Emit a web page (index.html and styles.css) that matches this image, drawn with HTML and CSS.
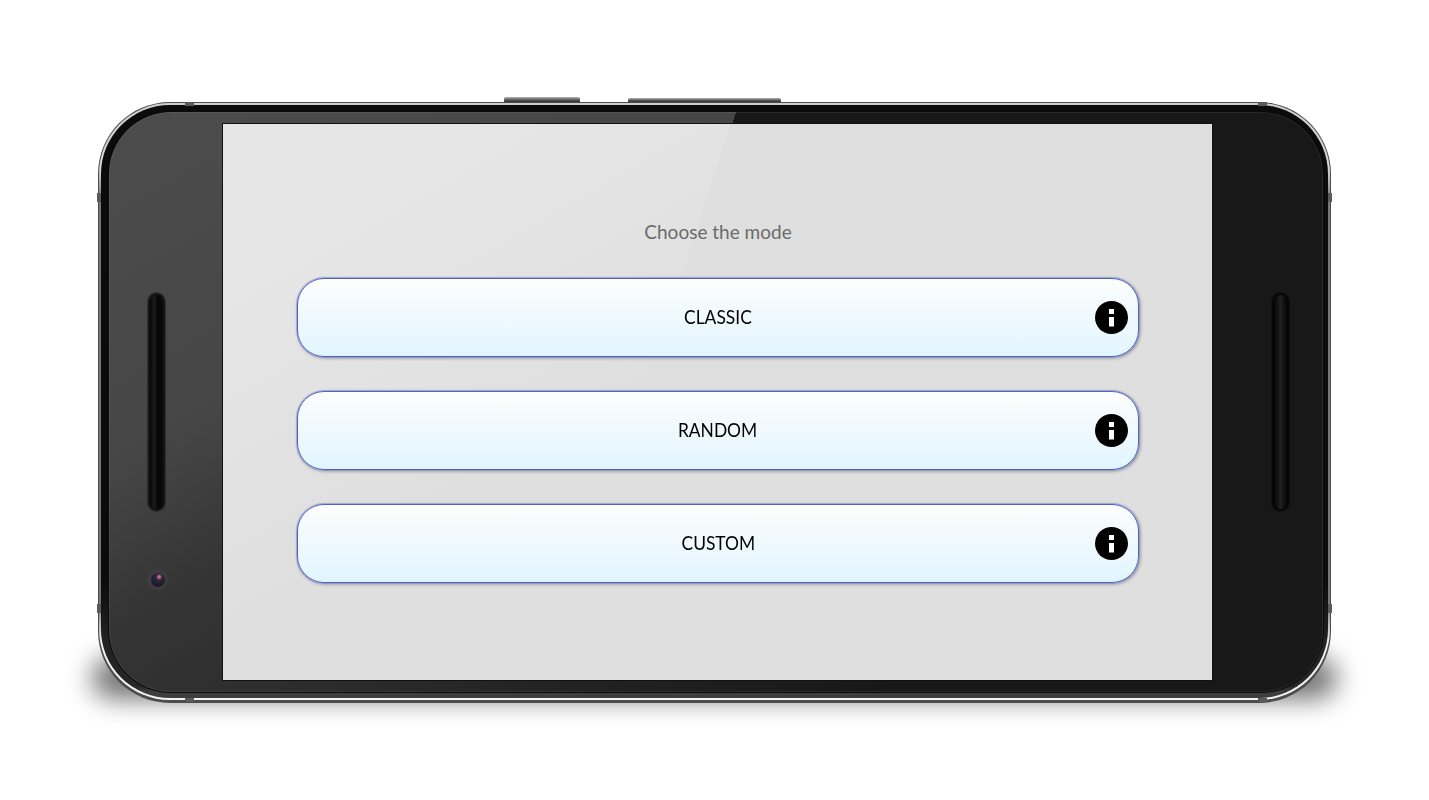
FILE: index.html
```html
<!DOCTYPE html>
<html lang="en">
<head>
    <meta charset="UTF-8">
    <title>Choose the mode</title>
    <link rel="stylesheet" href="styles.css">
</head>
<body>
    <div class="stage">
        <div class="keys">
            <span class="key key-power"></span>
            <span class="key key-volume"></span>
        </div>
        <div class="phone">
            <div class="shadow"></div>
            <div class="rim">
                <div class="band">
                    <div class="face">
                        <div class="bezel bezel-left">
                            <div class="speaker"></div>
                            <div class="camera"><span class="lens"></span></div>
                        </div>
                        <main class="screen">
                            <h1 class="title">Choose the mode</h1>
                            <div class="modes">
                                <button class="mode">
                                    <span class="mode-name">CLASSIC</span>
                                    <svg class="info" viewBox="0 0 33 33"><circle cx="16.5" cy="16.5" r="16.5" fill="#000"/><path d="M14 8h5v5h-5zM14 16h5v9.500h-5z" fill="#fff"/></svg>
                                </button>
                                <button class="mode">
                                    <span class="mode-name">RANDOM</span>
                                    <svg class="info" viewBox="0 0 33 33"><circle cx="16.5" cy="16.5" r="16.5" fill="#000"/><path d="M14 8h5v5h-5zM14 16h5v9.500h-5z" fill="#fff"/></svg>
                                </button>
                                <button class="mode">
                                    <span class="mode-name">CUSTOM</span>
                                    <svg class="info" viewBox="0 0 33 33"><circle cx="16.5" cy="16.5" r="16.5" fill="#000"/><path d="M14 8h5v5h-5zM14 16h5v9.500h-5z" fill="#fff"/></svg>
                                </button>
                            </div>
                        </main>
                        <div class="bezel bezel-right">
                            <div class="speaker speaker-dark"></div>
                        </div>
                    </div>
                </div>
            </div>
            <span class="joint joint-top joint-a"></span>
            <span class="joint joint-top joint-b"></span>
            <span class="joint joint-bottom joint-a"></span>
            <span class="joint joint-bottom joint-b"></span>
            <span class="joint joint-left joint-c"></span>
            <span class="joint joint-left joint-d"></span>
            <span class="joint joint-right joint-c"></span>
            <span class="joint joint-right joint-d"></span>
        </div>
    </div>
</body>
</html>
```

FILE: styles.css
```css
html { background: #fff; }
html, body { margin: 0; height: 100%; overflow: hidden; }
body { font-family: "Lato", "Open Sans", sans-serif; }
.stage { width: 1233px; padding: 97px 0 0 98px; }

/* side keys on the top edge */
.keys { display: flex; gap: 48px; height: 5px; padding-left: 406px; }
.key { display: block; background: linear-gradient(#b5b5b5, #555 60%, #333); border-radius: 2px 2px 0 0; }
.key-power { width: 76px; }
.key-volume { width: 153px; height: 4px; margin-top: 1px; }

/* phone body, ring by ring */
.phone { position: relative; width: 1233px; height: 601px; box-sizing: border-box; padding: 1px 1px 3px 1px; background: #4c4c4c; border-radius: 72px; }
.shadow { position: absolute; z-index: -1; left: -6px; right: -6px; top: 555px; bottom: 4px; background: rgba(0, 0, 0, .55); border-radius: 70px; filter: blur(13px); }
.rim { height: 100%; box-sizing: border-box; padding: 2px; border-radius: 71px; background: linear-gradient(#cfcfcf 0, #d8d8d8 11%, #777 16%, #777 84%, #eee 90%, #f4f4f4 100%); }
.band { height: 100%; box-sizing: border-box; padding: 7px 5px 6px 8px; border-radius: 69px; background: linear-gradient(#0b0b0b 80%, #222 90%, #262626 98%, #3e3e3e 99%); }
.face { display: flex; height: 100%; box-sizing: border-box; overflow: hidden; border-radius: 62px; box-shadow: 0 0 0 1px #0a0a0a, inset 0 0 0 1px rgba(255, 255, 255, .07); background:
    linear-gradient(108deg, transparent 51.5%, #181818 51.5%) top / 100% 12px no-repeat,
    linear-gradient(90deg, transparent 1103px, #181818 1103px),
    linear-gradient(150deg, #4c4c4c 2%, #464646 28%, #353535 40%, #2e2e2e 52%, #232323 65%, #181818 80%); }

.bezel { display: flex; flex-direction: column; flex: none; }
.bezel-left { width: 114px; padding-left: 39px; box-sizing: border-box; }
.bezel-right { width: 110px; padding-left: 60px; box-sizing: border-box; }
.speaker { width: 17px; height: 218px; margin-top: 181px; box-sizing: border-box; border: 2px solid #141414; border-radius: 9px; background: linear-gradient(90deg, #050505, #1c1c1c 30%, #060606 60%, #0a0a0a); box-shadow: 0 0 1px 1px rgba(0, 0, 0, .3); }
.speaker-dark { border-color: #050505; background: linear-gradient(90deg, #050505, #202020 50%, #050505); }
.camera { display: flex; align-items: center; justify-content: center; width: 21px; height: 21px; margin: 58px 0 0 -1px; border-radius: 50%; background: #3d3d40; }
.lens { width: 14px; height: 14px; border-radius: 50%; background: radial-gradient(circle at 58% 28%, #c36c76 0, #c36c76 8%, #2b2740 24%, #17151f 90%); }

/* the app itself */
.screen { flex: none; width: 989px; height: 556px; margin-top: 12px; box-sizing: border-box; padding: 96px 73px 0 74px; box-shadow: 0 0 0 1px #111; background:
    linear-gradient(108deg, transparent 43.4%, #dfdfdf 43.4%),
    linear-gradient(150deg, #e6e6e6 15%, #dfdfdf 45%); }
.title { margin: 0 0 34px; font-size: 19px; font-weight: 400; line-height: 24px; text-align: center; color: #6b6b6b; }
.modes { display: flex; flex-direction: column; gap: 34px; }
.mode { display: grid; grid-template-columns: 1fr auto 1fr; align-items: center; height: 79px; padding: 0 10px; box-sizing: border-box; border: 1px solid #4f63c6; border-radius: 27px; background: linear-gradient(#fdfdfd, #e1f5ff); box-shadow: 0 0 0 1px rgba(112, 128, 212, .45), 1px 1px 3px 1px rgba(0, 0, 0, .25); font: inherit; cursor: pointer; }
.mode-name { grid-column: 2; padding-bottom: 3px; font-size: 20px; line-height: 24px; color: #000; transform: scaleX(.87); }
.info { grid-column: 3; justify-self: end; display: block; width: 33px; height: 33px; }

/* antenna breaks in the metal frame */
.joint { position: absolute; background: #5a5a5a; }
.joint-top, .joint-bottom { width: 9px; height: 4px; }
.joint-left, .joint-right { width: 4px; height: 9px; }
.joint-top { top: 0; }
.joint-bottom { bottom: 1px; }
.joint-left { left: -1px; }
.joint-right { right: -1px; }
.joint-a { left: 87px; }
.joint-top.joint-b, .joint-bottom.joint-b { left: 1160px; }
.joint-c { top: 91px; }
.joint-d { top: 502px; }
```
